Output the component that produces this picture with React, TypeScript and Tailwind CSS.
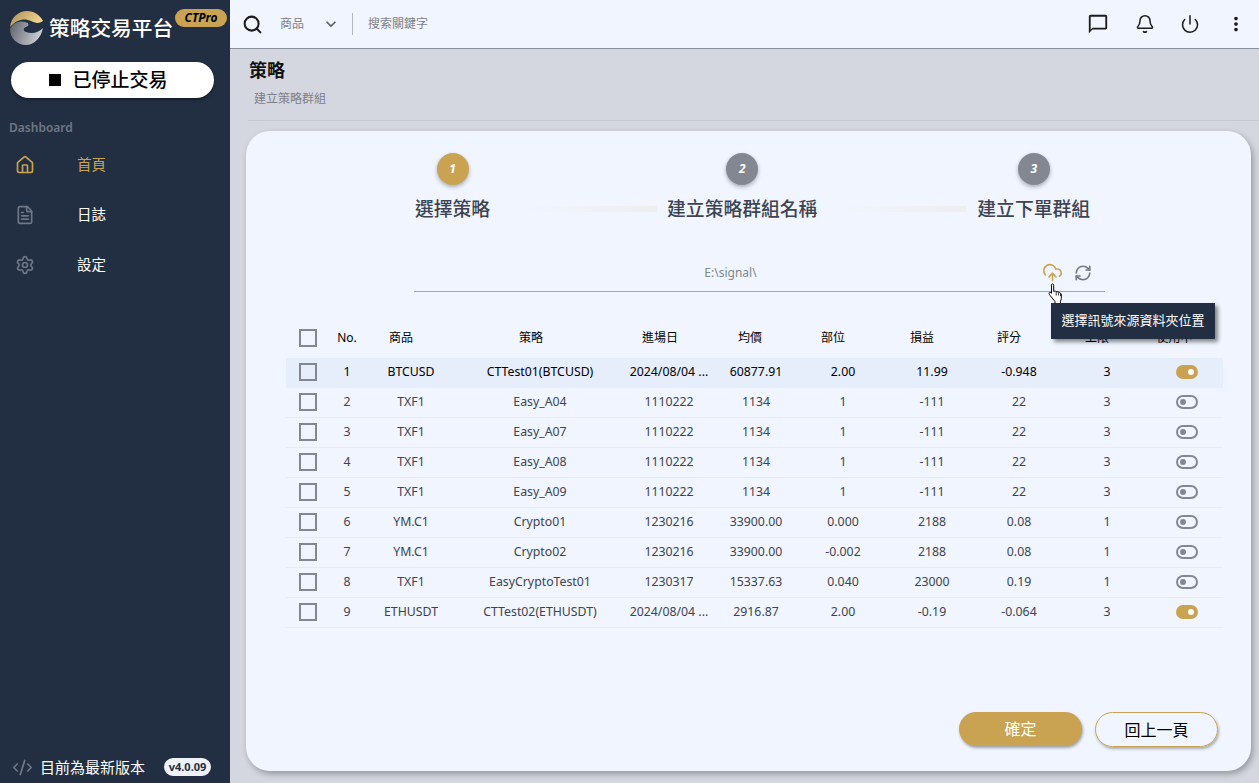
import { Bell, CodeXml, FileText, Home, Power, RefreshCw, Search, Settings, UploadCloud } from "lucide-react";
import { MdKeyboardArrowDown, MdMoreVert, MdOutlineChatBubbleOutline } from "react-icons/md";

const font = "font-['Noto_Sans','Noto_Sans_CJK_TC',sans-serif]";

const rows = [
  { no: 1, symbol: "BTCUSD", strategy: "CTTest01(BTCUSD)", date: "2024/08/04 ...", price: "60877.91", pos: "2.00", pnl: "11.99", score: "-0.948", limit: 3, on: true },
  { no: 2, symbol: "TXF1", strategy: "Easy_A04", date: "1110222", price: "1134", pos: "1", pnl: "-111", score: "22", limit: 3, on: false },
  { no: 3, symbol: "TXF1", strategy: "Easy_A07", date: "1110222", price: "1134", pos: "1", pnl: "-111", score: "22", limit: 3, on: false },
  { no: 4, symbol: "TXF1", strategy: "Easy_A08", date: "1110222", price: "1134", pos: "1", pnl: "-111", score: "22", limit: 3, on: false },
  { no: 5, symbol: "TXF1", strategy: "Easy_A09", date: "1110222", price: "1134", pos: "1", pnl: "-111", score: "22", limit: 3, on: false },
  { no: 6, symbol: "YM.C1", strategy: "Crypto01", date: "1230216", price: "33900.00", pos: "0.000", pnl: "2188", score: "0.08", limit: 1, on: false },
  { no: 7, symbol: "YM.C1", strategy: "Crypto02", date: "1230216", price: "33900.00", pos: "-0.002", pnl: "2188", score: "0.08", limit: 1, on: false },
  { no: 8, symbol: "TXF1", strategy: "EasyCryptoTest01", date: "1230317", price: "15337.63", pos: "0.040", pnl: "23000", score: "0.19", limit: 1, on: false },
  { no: 9, symbol: "ETHUSDT", strategy: "CTTest02(ETHUSDT)", date: "2024/08/04 ...", price: "2916.87", pos: "2.00", pnl: "-0.19", score: "-0.064", limit: 3, on: true },
];

const gridCols = "grid grid-cols-[44px_34px_94px_164px_94px_80px_94px_84px_90px_86px_73px] items-center text-center";

function Logo() {
  return (
    <svg width="36" height="36" viewBox="0 0 36 36" className="shrink-0">
      <defs>
        <linearGradient id="logoGold" x1="0" y1="0" x2="1" y2="0.4">
          <stop offset="0" stopColor="#a98d55" />
          <stop offset="1" stopColor="#f2d48e" />
        </linearGradient>
        <linearGradient id="logoGray" x1="0" y1="0" x2="1" y2="0.3">
          <stop offset="0" stopColor="#5b5f68" />
          <stop offset="1" stopColor="#c9ccd2" />
        </linearGradient>
      </defs>
      <path d="M1 17C2 7 10 1 18 1c7 0 13 4 16 10-4 3-8 2-12 0-6-3-14-2-21 6z" fill="url(#logoGold)" />
      <path d="M1 19c3-6 9-9 15-7 5 1 4 4 1 5-3 1-3 4 0 5 6 2 12 1 17-4-2 10-9 17-17 17C8 35 1 28 1 19z" fill="url(#logoGray)" />
    </svg>
  );
}

function NavItem({ icon, label, active }: { icon: React.ReactNode; label: string; active?: boolean }) {
  return (
    <div className="flex h-[50px] items-center pl-[15px]">
      <div className={`w-[62px] ${active ? "text-[#c9a352]" : "text-[#6f7786]"}`}>{icon}</div>
      <span className={`text-[14.5px] ${active ? "text-[#c9a352]" : "text-white"}`}>{label}</span>
    </div>
  );
}

function Sidebar() {
  return (
    <aside className="flex h-full w-[230px] shrink-0 flex-col bg-[#222f43]">
      <div className="relative flex h-[62px] items-start pl-[9px] pt-[10px]">
        <Logo />
        <span className="ml-[4px] mt-[4px] text-[20.7px] leading-[28px] font-medium text-white">策略交易平台</span>
        <span className="absolute left-[175px] top-[9px] flex h-[18px] w-[52px] items-center justify-center rounded-full bg-[#c9a352] text-[12px] font-bold italic text-black">CTPro</span>
      </div>
      <button className="mx-[11px] flex h-[36px] w-[203px] items-center justify-center gap-[11px] rounded-full bg-white pr-2 text-[19px] font-medium text-black shadow-[0_2px_3px_rgba(0,0,0,0.4)]">
        <span className="h-[12px] w-[12px] bg-black" />
        已停止交易
      </button>
      <div className="mt-[22px] pl-[9px] text-[12px] leading-4 font-semibold text-[#6f7786]">Dashboard</div>
      <nav className="mt-[4px]">
        <NavItem active label="首頁" icon={<Home size={20} strokeWidth={2} />} />
        <NavItem label="日誌" icon={<FileText size={20} strokeWidth={2} />} />
        <NavItem label="設定" icon={<Settings size={20} strokeWidth={2} />} />
      </nav>
      <div className="mt-auto flex h-[32px] items-center pl-[12px]">
        <CodeXml size={21} className="text-[#6f7786]" />
        <span className="ml-[7px] text-[15px] text-white">目前為最新版本</span>
        <span className="ml-[19px] flex h-[18px] w-[47px] items-center justify-center rounded-full bg-[#eef2f8] text-[11px] font-bold text-[#222f43]">v4.0.09</span>
      </div>
    </aside>
  );
}

function Topbar() {
  return (
    <header className="flex h-[49px] shrink-0 items-center border-b border-[#8a8f9c] bg-[#f0f5ff] pl-[12px] pr-[12px]">
      <Search size={21} strokeWidth={2.3} className="text-[#1b1b1b]" />
      <span className="ml-[17px] text-[12px] text-[#7d8088]">商品</span>
      <MdKeyboardArrowDown size={20} className="ml-[17px] text-[#5b5f68]" />
      <span className="ml-[11px] h-[22px] w-px bg-[#b4b7be]" />
      <span className="ml-[15px] text-[12px] text-[#7d8088]">搜索關鍵字</span>
      <div className="ml-auto flex items-center">
        <MdOutlineChatBubbleOutline size={22} className="text-[#1b1b1b]" />
        <Bell size={20} strokeWidth={1.8} className="ml-[26px] text-[#1b1b1b]" />
        <Power size={20} strokeWidth={1.8} className="ml-[25px] text-[#1b1b1b]" />
        <MdMoreVert size={22} className="ml-[25px] text-[#1b1b1b]" />
      </div>
    </header>
  );
}

function Step({ n, label, active }: { n: number; label: string; active?: boolean }) {
  return (
    <div className="flex flex-col items-center">
      <div className={`flex h-[32px] w-[32px] items-center justify-center rounded-full text-[12px] font-bold italic text-white shadow-[0_2px_4px_rgba(0,0,0,0.3)] ${active ? "bg-[#c9a352]" : "bg-[#838792]"}`}>{n}</div>
      <div className="mt-[11px] whitespace-nowrap text-[18.8px] leading-[26px] font-medium text-[#3d4350]">{label}</div>
    </div>
  );
}

function Connector({ width }: { width: string }) {
  return <div className={`mt-[53px] h-[6px] bg-gradient-to-r from-[#f0f5ff] to-[#eeeeee] ${width}`} />;
}

function Toggle({ on }: { on: boolean }) {
  if (on) {
    return (
      <span className="mx-auto mb-[2px] flex h-[14px] w-[22px] items-center justify-end rounded-full bg-[#c9a352] pr-[4px]">
        <span className="h-[6px] w-[6px] rounded-full bg-white" />
      </span>
    );
  }
  return (
    <span className="mx-auto mb-[2px] flex h-[14px] w-[22px] items-center rounded-full border-2 border-[#838792] pl-[2px]">
      <span className="h-[6px] w-[6px] rounded-full bg-[#838792]" />
    </span>
  );
}

function Check({ className = "" }: { className?: string }) {
  return <span className={`mx-auto block h-[18px] w-[18px] border-2 border-[#838792] ${className}`} />;
}

function Table() {
  return (
    <div className="ml-[40px] mt-[25px] w-[937px] self-start text-[12px] text-[#3d4350]">
      <div className={`${gridCols} h-[41px] text-black`}>
        <Check />
        <span>No.</span>
        <span className="pr-5">商品</span>
        <span className="pr-[18px]">策略</span>
        <span className="pr-[18px]">進場日</span>
        <span className="pr-3">均價</span>
        <span className="pr-5">部位</span>
        <span className="pr-5">損益</span>
        <span className="pr-5">評分</span>
        <span className="pr-5">上限</span>
        <span className="pr-6">使用中</span>
      </div>
      {rows.map((r) => (
        <div key={r.no} className={`${gridCols} h-[30px] border-b text-[12.3px] ${r.no === 1 ? "border-transparent bg-[#e6edfb] text-black" : "border-[#e6ecf6]"}`}>
          <Check className="mb-[2px]" />
          <span>{r.no}</span>
          <span>{r.symbol}</span>
          <span>{r.strategy}</span>
          <span className="whitespace-nowrap">{r.date}</span>
          <span>{r.price}</span>
          <span>{r.pos}</span>
          <span>{r.pnl}</span>
          <span>{r.score}</span>
          <span>{r.limit}</span>
          <Toggle on={r.on} />
        </div>
      ))}
    </div>
  );
}

function HandCursor() {
  return (
    <svg width="16" height="22" viewBox="0 0 16 22" className="absolute left-[802px] top-[152px]">
      <path d="M3.5 1.500c1-1 2.200-.5 2.200.8v6.200l1-.3c.6-.2 1.200 0 1.500.4.700-.3 1.400-.1 1.700.5.800-.3 1.600 0 1.800.7l.8.4c.6.4.8 1 .8 1.800v3.500c0 1-.3 1.800-.8 2.600v2.400H7v-2L2.500 13c-.7-.9-1.500-2-1.500-2.800 0-.7.8-1.100 1.500-.7l1 .8V2.500c0-.4 0-.7 0-1z" fill="#fff" stroke="#000" strokeWidth="1" strokeLinejoin="round" />
      <path d="M8.200 9v3.500M10.400 9.500v3M12.500 10.500v2.500" stroke="#000" strokeWidth="0.8" fill="none" />
    </svg>
  );
}

export default function App() {
  return (
    <div className={`${font} flex h-[783px] w-[1259px] overflow-hidden bg-[#d4d7e0]`}>
      <Sidebar />
      <main className="flex min-w-0 flex-1 flex-col">
        <Topbar />
        <div className="ml-[18px] flex h-[72px] shrink-0 flex-col border-b border-[#c4c7d0] pl-px">
          <h1 className="mt-[8px] text-[18px] leading-[26px] font-semibold text-[#111]">策略</h1>
          <p className="ml-[5px] mt-[8px] text-[12px] leading-4 text-[#7d8088]">建立策略群組</p>
        </div>
        <section className="relative ml-[16px] mt-[10px] flex h-[640px] w-[1005px] flex-col items-center rounded-[24px] bg-[#f0f5ff] shadow-[2px_3px_6px_rgba(0,0,0,0.3)]">
          <div className="ml-[8px] mt-[22px] flex items-start">
            <Step active n={1} label="選擇策略" />
            <Connector width="w-[132px] ml-[35px]" />
            <div className="ml-[10px]"><Step n={2} label="建立策略群組名稱" /></div>
            <Connector width="w-[127px] ml-[22px]" />
            <div className="ml-[11px]"><Step n={3} label="建立下單群組" /></div>
          </div>
          <div className="relative ml-[22px] mt-[36px] flex h-[34px] w-[691px] items-center border-b border-[#c9a352] pb-[4px]">
            <span className="flex-1 pr-[58px] text-center text-[12px] text-[#7b8a86]">E:\signal\</span>
            <UploadCloud size={21} strokeWidth={1.8} className="absolute left-[628px] top-[4px] text-[#c9a352]" />
            <RefreshCw size={18} strokeWidth={2.2} className="absolute left-[660px] top-[6px] text-[#747985]" />
          </div>
          <Table />
          <HandCursor />
          <div className="absolute left-[805px] top-[172px] flex h-[36px] w-[164px] items-center justify-center bg-[#222f43] text-[13px] text-white shadow-[3px_3px_4px_rgba(0,0,0,0.45)]">選擇訊號來源資料夾位置</div>
          <div className="mb-[24px] mt-auto flex gap-[13px] self-end pr-[33px]">
            <button className="h-[34px] w-[123px] rounded-full bg-[#c9a352] text-[16px] text-white shadow-[1px_2px_3px_rgba(0,0,0,0.35)]">確定</button>
            <button className="h-[35px] w-[123px] rounded-full border border-[#c9a352] text-[16px] text-black shadow-[1px_2px_3px_rgba(0,0,0,0.3)]">回上一頁</button>
          </div>
        </section>
      </main>
    </div>
  );
}
